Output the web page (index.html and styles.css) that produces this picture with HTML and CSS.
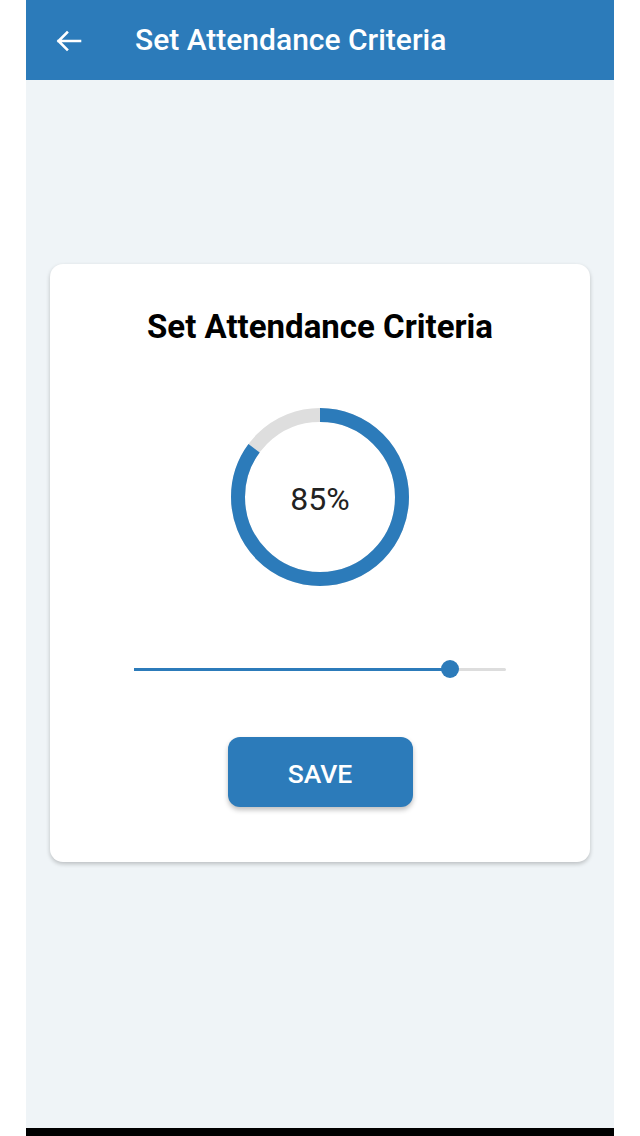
FILE: index.html
```html
<!DOCTYPE html>
<html>
<head>
<meta charset="utf-8">
<link rel="stylesheet" href="styles.css">
</head>
<body>
<div class="screen">
  <header class="appbar">
    <svg class="back" width="28" height="24" viewBox="0 0 28 24">
      <path d="M26 12H4.5M13 3.5L4.5 12L13 20.5" fill="none" stroke="#fff" stroke-width="2.6" stroke-linecap="square"/>
    </svg>
    <h1 class="appbar-title">Set Attendance Criteria</h1>
  </header>
  <main class="content">
    <section class="card">
      <h2 class="card-title">Set Attendance Criteria</h2>
      <div class="ring">
        <svg width="178" height="178" viewBox="0 0 178 178">
          <circle cx="89" cy="89" r="82" fill="none" stroke="#dedede" stroke-width="14"/>
          <circle cx="89" cy="89" r="82" fill="none" stroke="#2c7bba" stroke-width="14" stroke-dasharray="437.95 515.22" transform="rotate(-90 89 89)"/>
        </svg>
        <span class="ring-label">85%</span>
      </div>
      <div class="slider">
        <div class="track"><div class="fill" style="width:85%"></div></div>
        <div class="thumb" style="left:85%"></div>
      </div>
      <button class="save">SAVE</button>
    </section>
  </main>
  <div class="navbar"></div>
</div>
</body>
</html>
```
FILE: styles.css
```css
* { box-sizing: border-box; }
html, body { margin: 0; padding: 0; background: #ffffff; }
body { font-family: Roboto, "Noto Sans", "Liberation Sans", sans-serif; }
.screen {
  width: 588px;
  height: 1136px;
  margin: 0 auto;
  display: flex;
  flex-direction: column;
  background: #eff4f7;
}
.appbar {
  height: 80px;
  background: #2c7bba;
  display: flex;
  align-items: center;
  padding-left: 28px;
  flex-shrink: 0;
}
.back { display: block; margin-top: 1px; }
.appbar-title {
  margin: 0 0 0 53px;
  color: #ffffff;
  font-size: 30px;
  line-height: 36px;
  font-weight: 500;
}
.content {
  flex: 1;
  padding: 184px 24px 0;
}
.card {
  background: #ffffff;
  border-radius: 13px;
  box-shadow: 0 2px 4px rgba(0,0,0,0.22);
  padding: 40px 0 55px;
  display: flex;
  flex-direction: column;
  align-items: center;
}
.card-title {
  margin: 0;
  font-size: 33px;
  line-height: 46px;
  font-weight: 700;
  color: #000000;
}
.ring {
  position: relative;
  width: 178px;
  height: 178px;
  margin-top: 58px;
}
.ring svg { display: block; }
.ring-label {
  position: absolute;
  inset: 0;
  display: flex;
  align-items: center;
  justify-content: center;
  font-size: 32px;
  color: #222222;
  padding-top: 4px;
}
.slider {
  position: relative;
  width: 372px;
  height: 20px;
  margin-top: 73px;
  display: flex;
  align-items: center;
}
.track {
  width: 100%;
  height: 3px;
  background: #dddddd;
  border-radius: 2px;
}
.fill {
  height: 100%;
  background: #2c7bba;
}
.thumb {
  position: absolute;
  top: 1px;
  width: 18px;
  height: 18px;
  margin-left: -9px;
  border-radius: 50%;
  background: #2c7bba;
}
.save {
  margin-top: 58px;
  width: 185px;
  height: 70px;
  border: none;
  border-radius: 12px;
  background: #2c7bba;
  color: #ffffff;
  font-family: inherit;
  font-size: 26.5px;
  font-weight: 500;
  padding-top: 3px;
  box-shadow: 0 3px 5px rgba(0,0,0,0.25);
}
.navbar {
  height: 8px;
  background: #000000;
  flex-shrink: 0;
}
```
